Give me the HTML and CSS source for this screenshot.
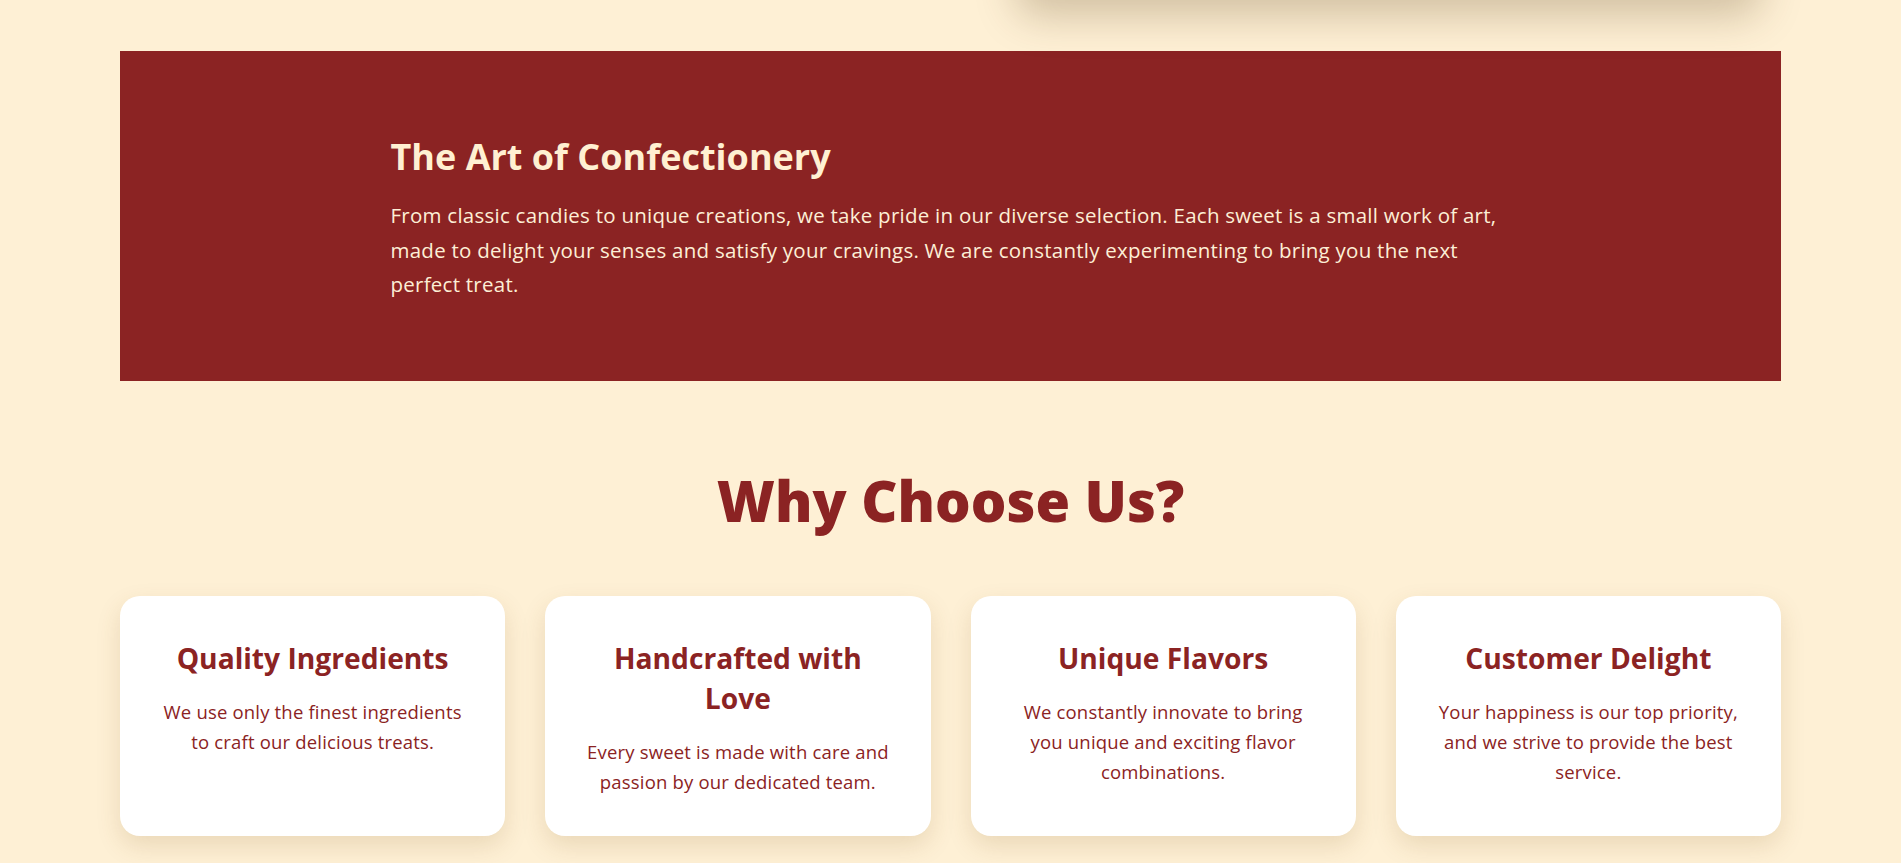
FILE: index.html
```html
<!DOCTYPE html>
<html lang="en">
<head>
<meta charset="utf-8">
<title>Sweet Shop</title>
<link rel="stylesheet" href="styles.css">
</head>
<body>
<section class="hero">
  <div class="hero-media"></div>
</section>
<main class="page">
  <section class="art">
    <div class="art-inner">
      <h2 class="art-title">The Art of Confectionery</h2>
      <p class="art-text">From classic candies to unique creations, we take pride in our diverse selection. Each sweet is a small work of art, made to delight your senses and satisfy your cravings. We are constantly experimenting to bring you the next perfect treat.</p>
    </div>
  </section>
  <section class="why">
    <h2 class="why-title">Why Choose Us?</h2>
    <div class="why-grid">
      <div class="card">
        <h3 class="card-title">Quality Ingredients</h3>
        <p class="card-text">We use only the finest ingredients to craft our delicious treats.</p>
      </div>
      <div class="card">
        <h3 class="card-title">Handcrafted with Love</h3>
        <p class="card-text">Every sweet is made with care and passion by our dedicated team.</p>
      </div>
      <div class="card">
        <h3 class="card-title">Unique Flavors</h3>
        <p class="card-text">We constantly innovate to bring you unique and exciting flavor combinations.</p>
      </div>
      <div class="card">
        <h3 class="card-title">Customer Delight</h3>
        <p class="card-text">Your happiness is our top priority, and we strive to provide the best service.</p>
      </div>
    </div>
  </section>
</main>
</body>
</html>
```
FILE: styles.css
```css
* { box-sizing: border-box; }
html { overflow: hidden; }
html, body { margin: 0; padding: 0; }
body {
  background: #fef0d5;
  color: #8b2323;
  font-family: "Open Sans", "Noto Sans", sans-serif;
}
.hero {
  height: 400px;
  margin-top: -404px;
  padding: 0 140px 0 0;
  display: flex;
  justify-content: flex-end;
}
.hero-media {
  width: 745px;
  height: 100%;
  border-radius: 20px;
  background: #e9d6b8;
  box-shadow: 0 20px 40px rgba(80, 50, 10, 0.25);
}
.page {
  padding: 0 120px;
}
.art {
  margin-top: 55px;
  background: #8b2323;
  height: 330px;
  padding: 84px 20px 0;
}
.art-inner {
  max-width: 1120px;
  margin: 0 auto;
}
.art-title {
  margin: 0 0 20px;
  font-size: 36px;
  line-height: 1.2;
  font-weight: 700;
  color: #fff0d2;
}
.art-text {
  margin: 0;
  font-size: 20.5px;
  letter-spacing: 0.25px;
  line-height: 34.5px;
  color: #fdefd6;
}
.why {
  padding: 86px 0 60px;
}
.why-title {
  margin: 0 0 62px;
  text-align: center;
  font-size: 56px;
  line-height: 1.2;
  font-weight: 800;
  color: #8b2323;
}
.why-grid {
  display: grid;
  grid-template-columns: repeat(4, 1fr);
  gap: 40px;
}
.card {
  background: #ffffff;
  border-radius: 20px;
  height: 240px;
  padding: 42px 40px 40px;
  text-align: center;
  box-shadow: 0 10px 25px rgba(120, 80, 20, 0.15);
}
.card-title {
  margin: 0 0 19px;
  font-size: 28.2px;
  line-height: 40px;
  font-weight: 700;
}
.card-text {
  margin: 0;
  font-size: 18.5px;
  letter-spacing: 0.18px;
  line-height: 29.8px;
}
```
